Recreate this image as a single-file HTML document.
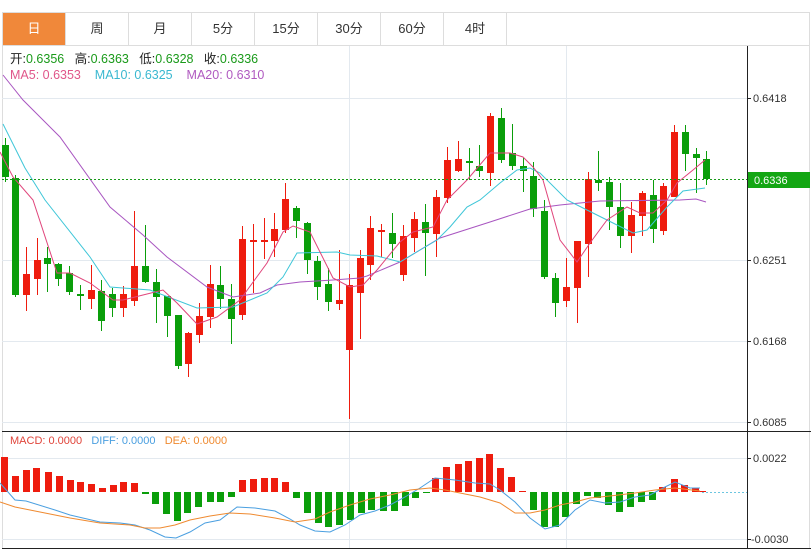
<!DOCTYPE html>
<html><head><meta charset="utf-8">
<style>
*{margin:0;padding:0;box-sizing:border-box}
body{width:811px;height:550px;background:#fff;font-family:"Liberation Sans","Noto Sans CJK SC",sans-serif;position:relative;overflow:hidden}
.tabs{position:absolute;left:2px;top:12px;width:808px;height:34px;border:1px solid #ddd;display:flex}
.tab{width:63px;height:32px;border-right:1px solid #ddd;font-size:13px;color:#333;text-align:center;line-height:32px}
.tab.on{background:#f0883a;color:#fff}
.box{position:absolute;left:2px;top:45px;width:808px;height:504px;border:1px solid #ddd;border-top:none}
.lg{position:absolute;font-size:12.5px;line-height:15px;white-space:nowrap}
svg{position:absolute;left:0;top:0}
</style></head><body>
<div class="tabs"><div class="tab on">日</div><div class="tab">周</div><div class="tab">月</div><div class="tab">5分</div><div class="tab">15分</div><div class="tab">30分</div><div class="tab">60分</div><div class="tab">4时</div></div>
<div class="box"></div>
<svg id="s" width="811" height="550" xmlns="http://www.w3.org/2000/svg">
<g stroke="#e3e9ef" stroke-width="1">
<line x1="2" y1="98.5" x2="747" y2="98.5"/><line x1="2" y1="260.5" x2="747" y2="260.5"/><line x1="2" y1="341.5" x2="747" y2="341.5"/><line x1="2" y1="422.5" x2="747" y2="422.5"/>
<line x1="2" y1="458.5" x2="747" y2="458.5"/><line x1="2" y1="539.5" x2="747" y2="539.5"/>
<line x1="349.5" y1="46" x2="349.5" y2="548"/><line x1="566.5" y1="46" x2="566.5" y2="548"/>
</g>
<g id="c"></g>
<line x1="2" y1="179.5" x2="747" y2="179.5" stroke="#1a9a1a" stroke-dasharray="2,2"/>
<line x1="702" y1="492.5" x2="747" y2="492.5" stroke="#6cc6e0" stroke-dasharray="2,2"/>
<g stroke="#222" stroke-width="1">
<line x1="747.5" y1="46" x2="747.5" y2="549"/>
<line x1="2" y1="431.5" x2="811" y2="431.5"/><line x1="2" y1="548.5" x2="811" y2="548.5"/>
<line x1="747" y1="98.5" x2="751" y2="98.5"/><line x1="747" y1="260.5" x2="751" y2="260.5"/><line x1="747" y1="341.5" x2="751" y2="341.5"/><line x1="747" y1="422.5" x2="751" y2="422.5"/><line x1="747" y1="458.5" x2="751" y2="458.5"/><line x1="747" y1="539.5" x2="751" y2="539.5"/>
</g>
<rect x="748" y="172" width="62" height="16" fill="#13a613"/>
<g font-family="Liberation Sans,sans-serif" font-size="11" fill="#333">
<text x="753" y="102">0.6418</text><text x="753" y="264">0.6251</text><text x="753" y="345">0.6168</text><text x="753" y="426">0.6085</text>
<text x="753" y="462">0.0022</text><text x="751" y="543">-0.0030</text>
<text x="754" y="184" fill="#fff">0.6336</text>
</g>
</svg>
<div class="lg" style="left:10px;top:52px;color:#222">开:<span style="color:#1a9a1a">0.6356</span>&nbsp;&nbsp; 高:<span style="color:#1a9a1a">0.6363</span>&nbsp;&nbsp; 低:<span style="color:#1a9a1a">0.6328</span>&nbsp;&nbsp; 收:<span style="color:#1a9a1a">0.6336</span></div>
<div class="lg" style="left:10px;top:68px"><span style="color:#e0568a">MA5: 0.6353</span>&nbsp;&nbsp;&nbsp; <span style="color:#3ab8d0">MA10: 0.6325</span>&nbsp;&nbsp;&nbsp; <span style="color:#b05ac0">MA20: 0.6310</span></div>
<div class="lg" style="left:10px;top:434px;font-size:11px"><span style="color:#e0443a">MACD: 0.0000</span>&nbsp;&nbsp; <span style="color:#4a9fe0">DIFF: 0.0000</span>&nbsp;&nbsp; <span style="color:#ef8a30">DEA: 0.0000</span></div>
<script>
var R="#ee1c0e",G="#0a9e0a",NS="http://www.w3.org/2000/svg",g=document.getElementById("c");
function el(n,a){var e=document.createElementNS(NS,n);for(var k in a)e.setAttribute(k,a[k]);g.appendChild(e);return e}
var C=[[5,145,177,138,182,G],[15,178,295,175,297,G],[26,274,295,247,311,R],[37,260,279,238,295,R],[47,258,264,247,292,G],[58,264,279,263,286,G],[69,273,292,266,295,G],[80,294,296,285,310,G],[91,290,299,265,309,R],[101,291,321,280,331,G],[112,294,308,288,317,G],[123,294,308,286,317,R],[134,266,301,211,306,R],[145,266,282,225,283,G],[156,282,297,269,323,G],[167,296,316,296,337,G],[178,315,366,315,369,G],[188,333,364,332,377,R],[199,316,335,303,343,R],[210,284,317,265,328,R],[220,285,299,266,309,G],[231,299,319,284,344,G],[242,239,315,226,320,R],[253,240,242,224,293,R],[264,240,242,218,259,R],[274,229,241,213,257,R],[285,199,230,183,233,R],[296,208,221,206,238,G],[307,223,260,222,274,G],[317,261,287,256,300,G],[328,284,302,268,311,G],[339,300,304,250,310,R],[349,285,350,274,419,R],[360,258,293,250,339,R],[370,228,265,216,280,R],[381,230,232,224,257,R],[392,233,244,213,258,G],[403,236,275,225,281,R],[414,219,238,212,252,R],[425,222,233,204,276,G],[436,197,234,190,257,R],[447,160,198,147,203,R],[458,159,171,141,172,R],[469,161,163,148,180,G],[479,166,171,145,177,G],[490,116,173,113,186,R],[501,118,160,108,163,G],[512,153,166,124,170,G],[523,166,171,158,192,G],[533,176,209,162,217,G],[544,211,277,200,279,G],[555,278,303,273,317,G],[566,287,301,258,307,R],[577,241,288,241,323,R],[588,179,244,172,277,R],[598,180,183,151,191,G],[609,182,207,177,230,G],[620,207,236,183,248,G],[631,215,236,202,253,R],[642,193,216,191,236,R],[653,195,229,180,243,G],[663,186,231,183,235,R],[674,132,197,125,197,R],[685,132,154,125,171,G],[696,154,158,148,193,G],[706,159,179,151,185,G]];
C.forEach(function(c){el("line",{x1:c[0]+.5,x2:c[0]+.5,y1:c[3],y2:c[4],stroke:c[5]});el("rect",{x:c[0]-3,y:c[1],width:7,height:Math.max(2,c[2]-c[1]),fill:c[5]});});
function pl(p,col){el("polyline",{points:p,fill:"none",stroke:col,"stroke-width":1});}
pl("3,75 23,100 60,137 110,207 143,235 167,257 207,287 233,297 260,293 277,285 300,282 333,280 360,278 367,276 400,262 440,238 490,222 530,209 560,205 600,201 680,200 696,199 706,202","#a855c0");
pl("3,124 25,168 45,200 90,257 110,287 150,290 197,308 233,307 267,293 283,277 297,253 337,252 350,255 377,256 400,262 420,250 437,240 450,227 467,207 480,200 500,183 517,170 530,168 540,173 567,200 587,210 613,223 633,233 647,230 667,207 683,191 705,188","#3ec6d8");
pl("0,152 13,177 33,200 57,273 70,273 90,283 113,300 123,300 143,295 163,290 177,303 197,324 217,317 240,300 267,263 283,232 293,226 310,232 333,278 350,287 363,285 377,270 400,242 413,232 433,227 447,200 467,180 490,153 510,153 523,157 533,167 543,180 560,240 577,262 590,243 607,220 627,207 640,213 653,213 667,200 677,183 693,170 705,160","#e0457b");
var B=[[4,457],[15,476],[26,470],[36,468],[48,472],[59,476],[70,480],[80,482],[91,484],[102,488],[113,485],[123,482],[134,483],[145,494],[155,504],[166,514],[177,521],[187,513],[198,507],[210,502],[220,502],[231,497],[242,480],[253,479],[264,478],[274,478],[285,482],[296,498],[307,513],[318,523],[328,527],[339,525],[350,520],[361,513],[371,510],[383,511],[394,511],[405,506],[415,498],[426,493],[435,478],[446,467],[458,464],[468,461],[479,458],[489,454],[500,468],[511,477],[522,491],[533,510],[544,527],[555,527],[565,517],[576,504],[587,496],[597,498],[608,505],[619,512],[630,507],[641,502],[652,500],[662,487],[674,479],[684,485],[695,488],[702,491]];
B.forEach(function(b){var up=b[1]<492;el("rect",{x:b[0]-3,y:up?b[1]:492,width:7,height:Math.max(1,Math.abs(b[1]-492)),fill:up?R:G});});
pl("0,483 15,500 26,501 55,510 70,515 100,522 120,523 135,525 150,530 165,537 176,538 190,532 205,523 220,520 237,507 255,508 275,511 290,519 300,525 315,531 330,532 345,525 360,515 375,511 390,505 405,497 420,488 435,478 455,480 475,483 490,484 500,490 515,502 530,518 545,529 560,525 575,510 590,500 605,503 620,502 635,497 650,495 665,487 675,482 690,488 700,488","#4a9fe0");
pl("0,502 15,507 40,512 70,518 100,523 130,525 145,528 160,528 175,525 190,520 210,516 230,513 250,514 275,518 295,522 315,519 330,512 350,505 370,499 390,495 410,490 430,488 445,490 460,493 480,497 500,503 515,513 530,513 545,510 560,505 575,502 590,498 610,496 635,493 655,490 675,488 700,491","#ef8a30");
</script>
</body></html>
